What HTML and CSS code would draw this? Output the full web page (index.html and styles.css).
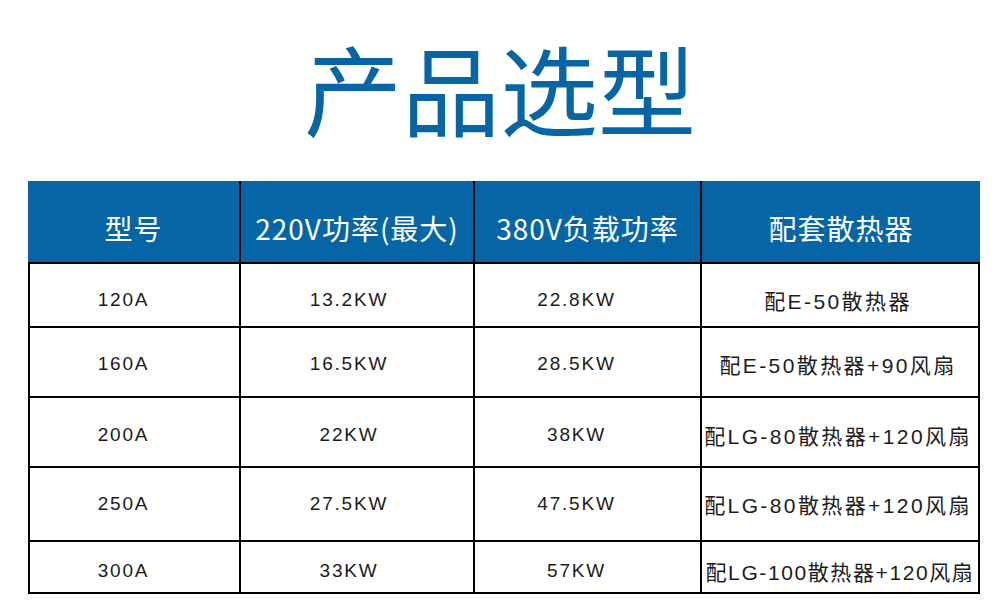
FILE: index.html
```
<!DOCTYPE html>
<html lang="zh-CN">
<head>
    <meta charset="UTF-8">
    <meta name="viewport" content="width=device-width, initial-scale=1.0">
    <title>产品选型</title>
    <link rel="stylesheet" href="styles.css">
</head>
<body>
    <h1 class="title">产品选型</h1>
    <table class="spec">
        <thead>
            <tr>
                <th class="c1">型号</th>
                <th class="c2">220V功率(最大)</th>
                <th class="c3">380V负载功率</th>
                <th class="c4">配套散热器</th>
            </tr>
        </thead>
        <tbody>
            <tr class="r1">
                <td class="c1">120A</td>
                <td class="c2">13.2KW</td>
                <td class="c3">22.8KW</td>
                <td class="c4">配E-50散热器</td>
            </tr>
            <tr class="r2">
                <td class="c1">160A</td>
                <td class="c2">16.5KW</td>
                <td class="c3">28.5KW</td>
                <td class="c4">配E-50散热器+90风扇</td>
            </tr>
            <tr class="r3">
                <td class="c1">200A</td>
                <td class="c2">22KW</td>
                <td class="c3">38KW</td>
                <td class="c4">配LG-80散热器+120风扇</td>
            </tr>
            <tr class="r4">
                <td class="c1">250A</td>
                <td class="c2">27.5KW</td>
                <td class="c3">47.5KW</td>
                <td class="c4">配LG-80散热器+120风扇</td>
            </tr>
            <tr class="r5">
                <td class="c1">300A</td>
                <td class="c2">33KW</td>
                <td class="c3">57KW</td>
                <td class="c4">配LG-100散热器+120风扇</td>
            </tr>
        </tbody>
    </table>
</body>
</html>
```

FILE: styles.css
```
* {
    margin: 0;
    padding: 0;
    box-sizing: border-box;
}

body {
    background-color: #fff;
    font-family: "Liberation Sans", "Noto Sans CJK SC", sans-serif;
}

.title {
    height: 181px;
    padding-top: 26px;
    text-align: center;
    font-family: "Noto Sans CJK SC", sans-serif;
    font-size: 98px;
    font-weight: normal;
    line-height: 120px;
    color: #0666a5;
}

.spec {
    margin-left: 28px;
    width: 952px;
    table-layout: fixed;
    border-collapse: separate;
    border-spacing: 0;
}

.spec th {
    height: 83px;
    padding-top: 12px;
    background-color: #0666a5;
    color: #fff;
    font-family: "Noto Sans CJK SC", sans-serif;
    font-size: 28px;
    font-weight: normal;
    letter-spacing: 1px;
    border-right: 2px solid #000;
    border-bottom: 2px solid #000;
}

.spec th.c4 {
    border-right: none;
}

.c1 { width: 213px; }
.c2 { width: 234px; }
.c3 { width: 227px; }
.c4 { width: 278px; }

.spec td {
    text-align: center;
    vertical-align: middle;
    font-size: 19px;
    letter-spacing: 1.8px;
    color: #1c1c1c;
    border-right: 2px solid #000;
    border-bottom: 2px solid #000;
    padding-top: 4px;
}

.spec td.c1 {
    border-left: 2px solid #000;
    padding-right: 22px;
}

.spec td.c2 { padding-right: 16px; }
.spec td.c3 { padding-right: 22px; }

.spec td.c4 {
    padding-right: 4px;
    font-size: 21px;
    letter-spacing: 2.4px;
}

.r1 td { height: 64px; padding-top: 10px; }
.r2 td { height: 70px; }
.r3 td { height: 70px; padding-top: 6px; }
.r4 td { height: 74px; padding-top: 0; }
.r5 td { height: 52px; padding-top: 8px; }

.r5 td.c4 {
    padding-right: 0;
    letter-spacing: 1.6px;
}
```
